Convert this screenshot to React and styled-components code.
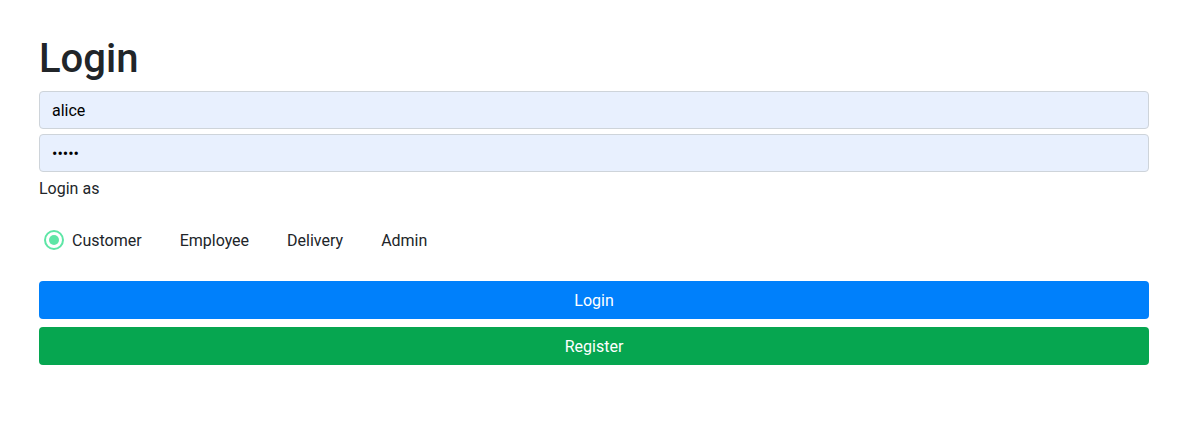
import React, { useState } from "react";
import styled, { createGlobalStyle } from "styled-components";

const GlobalStyle = createGlobalStyle`
  body {
    margin: 0;
    background: #fff;
    font-family: Roboto, "Liberation Sans", sans-serif;
    color: #212529;
  }
`;

const Container = styled.div`
  width: 1110px;
  padding: 35px 0 0 39px;
`;

const Title = styled.h1`
  margin: 0 0 8px;
  font-size: 40px;
  font-weight: 500;
  line-height: 1.2;
  color: #212529;
`;

const Input = styled.input`
  display: block;
  box-sizing: border-box;
  width: 100%;
  height: 38px;
  margin-bottom: 5px;
  padding: 6px 12px;
  font-family: inherit;
  font-size: 16px;
  color: #000;
  background: #e8f0fe;
  border: 1px solid #ced4da;
  border-radius: 4px;
  outline: none;
`;

const Label = styled.div`
  font-size: 16px;
  line-height: 24px;
  margin-top: 2px;
`;

const RadioGroup = styled.div`
  display: flex;
  gap: 10px;
  margin: 27px 0 0 5px;
  height: 24px;
  align-items: center;
`;

const Option = styled.label`
  display: flex;
  align-items: center;
  gap: 8px;
  font-size: 16px;
  cursor: pointer;
`;

const Dot = styled.span`
  box-sizing: border-box;
  width: 20px;
  height: 20px;
  border-radius: 50%;
  border: 2px solid ${(p) => (p.$on ? "#5ee6a6" : "transparent")};
  display: flex;
  align-items: center;
  justify-content: center;

  &::after {
    content: "";
    width: 10px;
    height: 10px;
    border-radius: 50%;
    background: ${(p) => (p.$on ? "#5ee6a6" : "transparent")};
  }
`;

const Button = styled.button`
  display: block;
  width: 100%;
  height: 38px;
  margin-bottom: 8px;
  border: none;
  border-radius: 4px;
  font-family: inherit;
  font-size: 16px;
  color: #fff;
  background: ${(p) => p.$bg};
  cursor: pointer;
`;

const Buttons = styled.div`
  margin-top: 29px;
`;

const roles = ["Customer", "Employee", "Delivery", "Admin"];

export default function App() {
  const [role, setRole] = useState("Customer");
  return (
    <>
      <GlobalStyle />
      <Container>
        <Title>Login</Title>
        <Input defaultValue="alice" />
        <Input type="password" defaultValue="alice" />
        <Label>Login as</Label>
        <RadioGroup>
          {roles.map((r) => (
            <Option key={r} onClick={() => setRole(r)}>
              <Dot $on={role === r} />
              {r}
            </Option>
          ))}
        </RadioGroup>
        <Buttons>
          <Button $bg="#0080fb">Login</Button>
          <Button $bg="#06a650">Register</Button>
        </Buttons>
      </Container>
    </>
  );
}
